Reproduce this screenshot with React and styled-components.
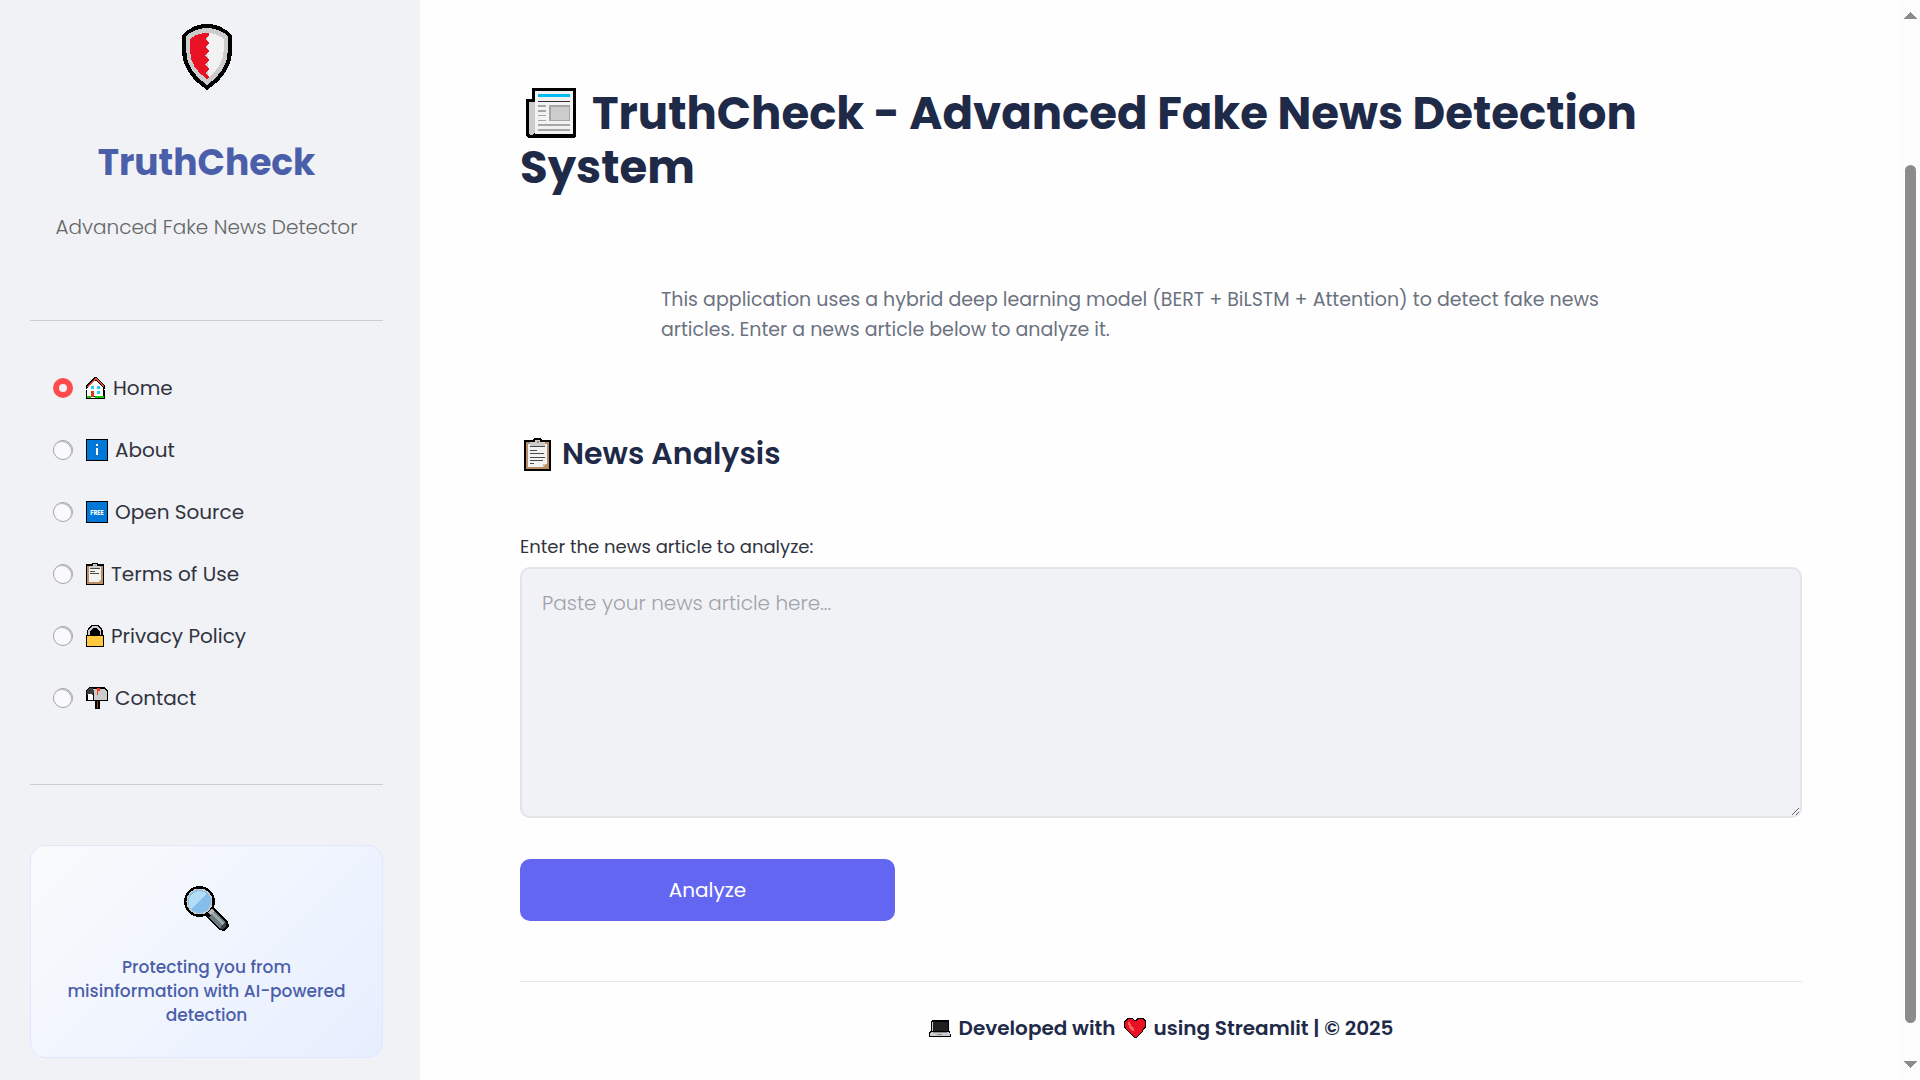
import React, { useState } from "react";
import styled, { createGlobalStyle } from "styled-components";

const GlobalStyle = createGlobalStyle`
  *, *::before, *::after {
    box-sizing: border-box;
  }
  body {
    margin: 0;
    background: #fefefe;
    color: #31333f;
    font-family: Poppins, Inter, "Noto Sans", sans-serif;
  }
  h1, h2, p {
    margin: 0;
  }
`;

// every icon shares the same svg settings
const Icon = ({ width, height, box, children }) => (
  <svg
    width={width}
    height={height}
    viewBox={box || `0 0 ${width} ${height}`}
    shapeRendering="crispEdges"
    aria-hidden="true"
  >
    {children}
  </svg>
);

const ShieldIcon = () => (
  <Icon width={50} height={66}>
    <path
      d="M25 0C34 0 42 3 50 11V26C50 43 40 56 25 66C10 56 0 43 0 26V11C8 3 16 0 25 0Z"
      fill="#000"
    />
    <path
      d="M25 4C33 4 40 7 46 12V26C46 41 37 53 25 61C13 53 4 41 4 26V12C10 7 17 4 25 4Z"
      fill="#cccccc"
    />
    <path d="M25 9C32 9 37 11 42 15V26C41 38 35 47 26 54Z" fill="#f2f2f2" />
    <path
      d="M8 15C14 10 19 9 27 9L27 11L23 15L27 19L23 23L27 27L23 31L27 36L23 40L27 45L23 49L27 53L25 55C14 48 8 38 8 26Z"
      fill="#e81224"
    />
  </Icon>
);

const HomeIcon = () => (
  <Icon width={20} height={22}>
    <path d="M9 0h1l9 9v3h-1v1h1v9H0v-9h1v-1H0V8z" fill="#000" />
    <path d="M9 4h1l7 7v8H1v-8z" fill="#fff" />
    <path d="M9 1h1l8 8v1h-1l-7-7H9l-7 7H1V9z" fill="#e0533a" />
    <path d="M5 9h3v3H5zM11 9h3v3h-3zM11 14h3v3h-3z" fill="#26c9fc" />
    <path d="M5 14h3v6H5z" fill="#da3b1e" />
    <path d="M1 19h4v2H1zM9 19h9v2H9z" fill="#16c60c" />
    <path d="M5 20h4v1H5z" fill="#fff" />
  </Icon>
);

const InfoIcon = () => (
  <Icon width={22} height={22}>
    <path d="M0 0h22v22H0z" fill="#000" />
    <path d="M1 1h20v20H1z" fill="#0078d7" />
    <path d="M10 5h2v2h-2zM10 9h2v7h-2z" fill="#fff" />
  </Icon>
);

const FreeIcon = () => (
  <Icon width={22} height={22}>
    <path d="M0 0h22v22H0z" fill="#000" />
    <path d="M1 1h20v20H1z" fill="#0078d7" />
    <text
      x="11"
      y="14"
      textAnchor="middle"
      fontSize="6"
      fontWeight="700"
      fill="#fff"
    >
      FREE
    </text>
  </Icon>
);

const ClipboardIcon = ({ width = 18, height = 22 }) => (
  <Icon width={width} height={height} box="0 0 27 33">
    <path d="M0 2h9V1l2-1h5l2 1v1h9v31H0z" fill="#000" />
    <path d="M2 4h23v27H2z" fill="#b98e62" />
    <path d="M4 6h19v20l-4 3H4z" fill="#f2f2f2" />
    <path d="M19 29v-3h4z" fill="#d8c0a4" />
    <path d="M11 2h5v2h5v4H6V4h5z" fill="#cccccc" />
    <path d="M13 3h2v2h-2z" fill="#b98e62" />
    <path
      d="M6 8h15v1H6zM6 12h7v1H6zM6 15h14v1H6zM6 19h15v1H6zM6 22h13v1H6zM6 25h4v1H6z"
      fill="#4a4a4a"
    />
  </Icon>
);

const LockIcon = () => (
  <Icon width={18} height={22}>
    <path
      d="M6 0h6l3 2 2 4v4h1v12H0V10l1-1V6l2-4z"
      fill="#000"
    />
    <path
      d="M2 10V6l2-3 2-2h6l3 4v5h-1V7l-3-4H7L4 7v3z"
      fill="#cccccc"
    />
    <path d="M1 11h16v10H1z" fill="#ffc83d" />
  </Icon>
);

const MailboxIcon = () => (
  <Icon width={22} height={22}>
    <path d="M3 0h15l4 3v11h-8v8H9v-8H0V3z" fill="#000" />
    <path d="M7 2h11l3 2v9H8V6z" fill="#cccccc" />
    <path d="M3 1h4l1 3-1 4H1V3z" fill="#3b3b3b" />
    <path d="M2 7h4l1 2v4H2z" fill="#fff" />
    <path d="M11 1h3v3h-2v4h-1z" fill="#f03a17" />
    <path d="M11 14h1v7h-1z" fill="#8e562e" />
  </Icon>
);

const MagnifierIcon = () => (
  <Icon width={45} height={45}>
    <path d="M24 25l5-4 15 14 1 5-4 5-6-1-13-14z" fill="#000" />
    <circle cx="15.500" cy="15.500" r="15.500" fill="#000" />
    <circle cx="15.500" cy="15.500" r="13" fill="#cccccc" />
    <circle cx="15.500" cy="15.500" r="11.500" fill="#83beec" />
    <path d="M7 23A11 11 0 0 1 23 8Z" fill="#b3dcf5" />
    <path d="M24 26l4-3 4 4-4 4z" fill="#b5bcbd" />
    <path d="M27 29l3-4 12 12v3l-3 3h-3L25 31z" fill="#69797e" />
    <path d="M29 26l11 11-2 2-11-11z" fill="#9ba8ab" />
    <path d="M39 38l3-2v4l-3 3h-3z" fill="#394146" />
  </Icon>
);

const NewspaperIcon = () => (
  <Icon width={50} height={50}>
    <path d="M6 0h44v48l-2 2H2l-2-2V11h6z" fill="#000" />
    <path d="M9 3h38v43H9z" fill="#f2f2f2" />
    <path d="M3 14h6v30l-2 3H4l-1-2z" fill="#cccccc" />
    <path d="M12 6h32v3H12z" fill="#00bcf2" />
    <path d="M12 13h32v1H12z" fill="#333" />
    <path d="M23 17h21v16H23z" fill="#a6a6a6" />
    <path d="M25 19h18v13H25z" fill="#cccccc" />
    <path
      d="M12 17h8v2h-8zM12 22h8v2h-8zM12 27h8v1h-8zM12 32h8v1h-8zM12 36h32v2H12zM12 41h32v2H12z"
      fill="#a6a6a6"
    />
  </Icon>
);

const LaptopIcon = () => (
  <Icon width={22} height={17}>
    <path d="M3 0h17v10l2 5v2H0v-4l2-3V1z" fill="#000" />
    <path d="M4 2h15v9H4z" fill="#1f1f1f" />
    <path d="M3 2h1v9H3zM1 14l1-2h18l1 2v2H1z" fill="#cccccc" />
    <path d="M4 12h14v1H4zM8 14h5v1H8z" fill="#8a8a8a" />
  </Icon>
);

const HeartIcon = () => (
  <Icon width={22} height={20}>
    <path
      d="M3 0h5l3 2 3-2h5l3 3v6l-3 4-7 7h-2l-7-7-3-4V3z"
      fill="#000"
    />
    <path
      d="M4 1h4l2 2h2l2-2h4l3 3v4l-3 5-6 6h-2l-6-6-3-5V4z"
      fill="#e81224"
    />
    <path d="M4 4h2l1 4 3 3v2H8L5 9z" fill="#f2685c" />
  </Icon>
);

const ArrowIcon = ({ down }) => (
  <Icon width={13} height={7}>
    <path d={down ? "M0 0h13L7 7H6z" : "M6 0h1l6 7H0z"} fill="#8b8b8b" />
  </Icon>
);

const pages = [
  { name: "Home", icon: <HomeIcon /> },
  { name: "About", icon: <InfoIcon /> },
  { name: "Open Source", icon: <FreeIcon /> },
  { name: "Terms of Use", icon: <ClipboardIcon /> },
  { name: "Privacy Policy", icon: <LockIcon /> },
  { name: "Contact", icon: <MailboxIcon /> },
];

const App = () => {
  const [page, setPage] = useState("Home");
  const [article, setArticle] = useState("");

  return (
    <>
      <GlobalStyle />
      <Layout>
        <Sidebar>
          <Brand>
            <ShieldIcon />
            <BrandName>TruthCheck</BrandName>
            <Tagline>Advanced Fake News Detector</Tagline>
          </Brand>
          <Divider />
          <Nav>
            {pages.map(({ name, icon }) => (
              <NavItem key={name}>
                <Radio
                  name="page"
                  checked={page === name}
                  onChange={() => setPage(name)}
                />
                {icon}
                <span>{name}</span>
              </NavItem>
            ))}
          </Nav>
          <Divider />
          <Card>
            <MagnifierIcon />
            <p>Protecting you from misinformation with AI-powered detection</p>
          </Card>
        </Sidebar>
        <Main>
          <Title>
            <NewspaperIcon />
            TruthCheck - Advanced Fake News Detection System
          </Title>
          <Intro>
            This application uses a hybrid deep learning model (BERT + BiLSTM +
            Attention) to detect fake news articles. Enter a news article below
            to analyze it.
          </Intro>
          <Heading>
            <ClipboardIcon width={27} height={33} />
            News Analysis
          </Heading>
          <Field>
            <label htmlFor="article">Enter the news article to analyze:</label>
            <TextArea
              id="article"
              placeholder="Paste your news article here..."
              value={article}
              onChange={(e) => setArticle(e.target.value)}
            />
          </Field>
          <Button type="button">Analyze</Button>
          <Footer>
            <LaptopIcon />
            <span>Developed with</span>
            <HeartIcon />
            <span>using Streamlit | © 2025</span>
          </Footer>
        </Main>
        <ScrollBar>
          <ArrowIcon />
          <Track>
            <Thumb />
          </Track>
          <ArrowIcon down />
        </ScrollBar>
      </Layout>
    </>
  );
};

const Layout = styled.div`
  display: grid;
  grid-template-columns: 420px 1fr 19px;
  min-height: 100vh;
`;

const Sidebar = styled.aside`
  display: flex;
  flex-direction: column;
  padding: 24px 37px 22px 30px;
  background: #f0f2f6;
`;

const Brand = styled.div`
  display: flex;
  flex-direction: column;
  align-items: center;
  padding-bottom: 78px;
`;

const BrandName = styled.h2`
  margin-top: 51px;
  color: #4b5eaa;
  font-size: 36px;
  font-weight: 700;
  line-height: 44px;
`;

const Tagline = styled.p`
  margin-top: 27px;
  color: #666;
  font-size: 20px;
  font-weight: 300;
  line-height: 30px;
`;

const Divider = styled.hr`
  width: 100%;
  height: 1px;
  margin: 0;
  border: none;
  background: #cbcdd2;
`;

const Nav = styled.nav`
  padding: 36px 0 55px 23px;
`;

const NavItem = styled.label`
  display: flex;
  align-items: center;
  height: 62px;
  font-size: 20px;
  line-height: 30px;
  cursor: pointer;
  svg {
    margin: 0 7px 0 13px;
  }
`;

const Radio = styled.input.attrs({ type: "radio" })`
  appearance: none;
  width: 20px;
  height: 20px;
  margin: 0;
  border: 1px solid #a3a5ad;
  border-radius: 50%;
  background: #fafafc;
  box-shadow: inset -1px 1px 0 #b8bac1;
  &:checked {
    border: 6px solid #ff4b4b;
    background: #f0f2f6;
    box-shadow: none;
  }
`;

const Card = styled.section`
  display: flex;
  flex-direction: column;
  align-items: center;
  gap: 24px;
  margin-top: 60px;
  padding: 40px 30px 30px;
  border: 1px solid #e0e7ff;
  border-radius: 15px;
  background: linear-gradient(135deg, #f9fafb 0%, #f0f5fe 50%, #e6eefe 100%);
  color: #4b5eaa;
  font-size: 17px;
  font-weight: 500;
  line-height: 24px;
  text-align: center;
`;

const Main = styled.main`
  display: flex;
  flex-direction: column;
  min-width: 0;
  padding: 87px 99px 35px 100px;
`;

const Title = styled.h1`
  color: #1e2a47;
  font-size: 45px;
  font-weight: 700;
  line-height: 54px;
  svg {
    margin: 0 16px 0 6px;
    vertical-align: -9px;
  }
`;

const Intro = styled.p`
  width: 100%;
  max-width: 1000px;
  margin: 90px auto 0;
  color: #6b7280;
  font-size: 19px;
  line-height: 30px;
`;

const Heading = styled.h2`
  display: flex;
  align-items: center;
  gap: 11px;
  margin-top: 89px;
  padding-left: 4px;
  color: #1e2a47;
  font-size: 30px;
  font-weight: 600;
  line-height: 40px;
`;

const Field = styled.div`
  display: flex;
  flex-direction: column;
  gap: 8px;
  margin-top: 61px;
  label {
    font-size: 18px;
    line-height: 24px;
  }
`;

const TextArea = styled.textarea`
  width: 100%;
  height: 251px;
  padding: 19px 20px;
  border: 2px solid #e2e4e8;
  border-radius: 10px;
  background: #f0f2f6;
  color: #31333f;
  font-family: inherit;
  font-size: 20px;
  font-weight: 300;
  line-height: 30px;
  resize: vertical;
  &::placeholder {
    color: #a0a2aa;
  }
`;

const Button = styled.button`
  width: 375px;
  height: 62px;
  margin-top: 41px;
  border: none;
  border-radius: 10px;
  background: #6366f1;
  color: #fff;
  font-family: inherit;
  font-size: 20px;
  cursor: pointer;
`;

const Footer = styled.footer`
  display: flex;
  align-items: center;
  justify-content: center;
  gap: 8px;
  margin-top: 60px;
  padding-top: 31px;
  border-top: 1px solid #e6e6e8;
  color: #1e2a47;
  font-size: 20px;
  font-weight: 600;
  line-height: 30px;
`;

const ScrollBar = styled.div`
  display: flex;
  flex-direction: column;
  align-items: center;
  padding: 12px 0;
  background: #fcfcfc;
`;

const Track = styled.div`
  display: flex;
  flex: 1;
  flex-direction: column;
  &::before {
    content: "";
    flex: 146;
  }
  &::after {
    content: "";
    flex: 38;
  }
`;

const Thumb = styled.div`
  flex: 858;
  width: 11px;
  border-radius: 6px;
  background: #8b8b8b;
`;

export default App;
